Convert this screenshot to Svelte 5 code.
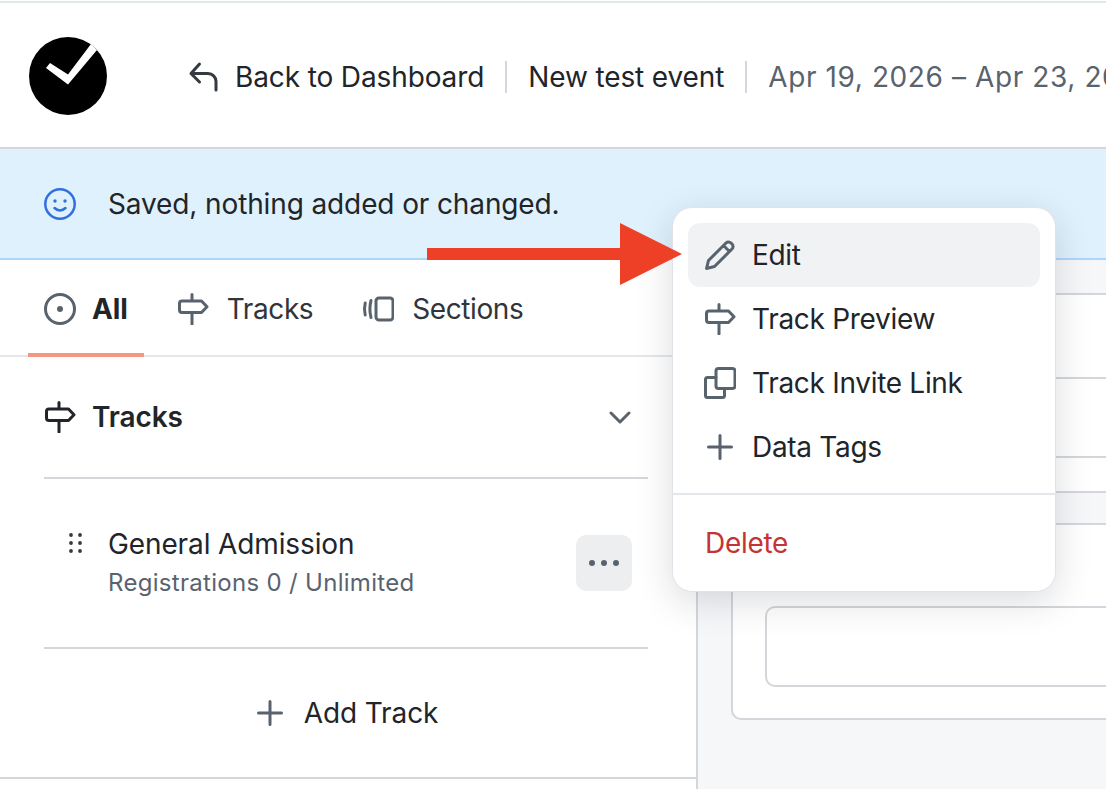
<script>
  const tabs = [
    { id: 'all', label: 'All', active: true },
    { id: 'tracks', label: 'Tracks' },
    { id: 'sections', label: 'Sections' }
  ];
  const menu = [
    { id: 'edit', label: 'Edit', hover: true },
    { id: 'sign', label: 'Track Preview' },
    { id: 'copy', label: 'Track Invite Link' },
    { id: 'plus', label: 'Data Tags' }
  ];
</script>

{#snippet sign()}
  <path d="M15 1.500V8M15 19.500V31M5 8a2.500 2.500 0 0 0-2.500 2.500V17a2.500 2.500 0 0 0 2.500 2.500H24.500L30 13.750 24.500 8Z" />
{/snippet}

{#snippet icon(id)}
  {#if id === 'all'}
    <svg class="ico" width="32" height="32" viewBox="0 0 32 32"><circle cx="16" cy="16" r="14.500" /><circle class="fill" cx="16" cy="16" r="3" /></svg>
  {:else if id === 'tracks' || id === 'sign'}
    <svg class="ico" width="32" height="32" viewBox="0 0 32 32">{@render sign()}</svg>
  {:else if id === 'sections'}
    <svg class="ico" width="32" height="32" viewBox="0 0 32 32"><rect x="14" y="5" width="17" height="22" rx="3" /><path d="M9 7.500Q6.800 16 9 24.500M3.200 10Q1.800 16 3.200 22" /></svg>
  {:else if id === 'edit'}
    <svg class="ico" width="32" height="32" viewBox="0 0 32 32"><path d="M2.500 29.500 4.500 21.500 22 4a3.500 3.500 0 0 1 5 0l1 1a3.500 3.500 0 0 1 0 5L10.500 27.500ZM19.500 6.500 25.500 12.500" /></svg>
  {:else if id === 'copy'}
    <svg class="ico" width="32" height="32" viewBox="0 0 32 32"><rect x="12" y="1.500" width="19" height="20" rx="2.500" /><path d="M12 10.500H3.500a2 2 0 0 0-2 2V28.500a2 2 0 0 0 2 2H18.500a2 2 0 0 0 2-2V21.500" /></svg>
  {:else if id === 'plus'}
    <svg class="ico" width="32" height="32" viewBox="0 0 32 32"><path d="M16 4.500V27.500M4.500 16H27.500" /></svg>
  {/if}
{/snippet}

<div class="page">
  <div class="strip"></div>

  <header class="top">
    <svg class="logo" width="78" height="78" viewBox="0 0 78 78">
      <circle cx="39" cy="39" r="39" fill="#000" />
      <path d="M17 31 21 26 39 37.500 62 7 68 13 39 47.500Z" fill="#fff" />
    </svg>
    <nav class="crumbs">
      <svg class="ico back" width="32" height="32" viewBox="0 0 32 32"><path d="M11.500 3 3 12.500 11.500 21M3 12.500H20a8 8 0 0 1 8 8V29" /></svg>
      <span class="back-label">Back to Dashboard</span>
      <i class="sep"></i>
      <span>New test event</span>
      <i class="sep"></i>
      <span class="muted">Apr 19, 2026 – Apr 23, 2026</span>
    </nav>
  </header>

  <div class="banner">
    <svg class="smile" width="32" height="32" viewBox="0 0 32 32">
      <circle cx="16" cy="16" r="14.700" />
      <circle class="eye" cx="11" cy="13" r="1.700" />
      <circle class="eye" cx="21" cy="13" r="1.700" />
      <path d="M10.500 20Q16 25 21.500 20" />
    </svg>
    <span>Saved, nothing added or changed.</span>
  </div>

  <main class="body">
    <section class="left">
      <div class="tabs">
        {#each tabs as t}
          <button class="tab" class:active={t.active}>
            {@render icon(t.id)}
            <span>{t.label}</span>
          </button>
        {/each}
      </div>

      <div class="inner">
        <div class="group-head">
          <svg class="ico dark" width="32" height="32" viewBox="0 0 32 32">{@render sign()}</svg>
          <strong>Tracks</strong>
          <svg class="ico chev" width="24" height="14" viewBox="0 0 24 14"><path d="M3 2 12 11 21 2" /></svg>
        </div>

        <div class="track">
          <svg class="grip" width="16" height="24" viewBox="0 0 16 24">
            {#each [3, 11, 19] as y}
              <circle cx="3" cy={y} r="1.900" /><circle cx="12" cy={y} r="1.900" />
            {/each}
          </svg>
          <div class="track-text">
            <div class="track-name">General Admission</div>
            <div class="track-sub">Registrations 0 / Unlimited</div>
          </div>
          <button class="more" aria-label="More"><b></b><b></b><b></b></button>
        </div>

        <div class="add">
          {@render icon('plus')}
          <span>Add Track</span>
        </div>
      </div>
      <div class="left-end"></div>
    </section>

    <section class="right">
      <div class="stack">
        <div class="row h84"></div>
        <div class="row h79"></div>
        <div class="row h33"></div>
      </div>
      <div class="card">
        <div class="field"></div>
      </div>
    </section>
  </main>

  <div class="menu">
    <ul>
      {#each menu as m}
        <li class:hover={m.hover}>
          {@render icon(m.id)}
          <span>{m.label}</span>
        </li>
      {/each}
    </ul>
    <hr />
    <div class="delete">Delete</div>
  </div>

  <svg class="arrow" width="256" height="64" viewBox="0 0 256 64">
    <path d="M0 25H193V0L255 31 193 62V37H0Z" fill="#ee4026" />
  </svg>
</div>

<style>
  :global(body) {
    margin: 0;
    background: #fff;
  }
  .page {
    position: relative;
    width: 1106px;
    height: 789px;
    overflow: hidden;
    display: flex;
    flex-direction: column;
    font-family: Inter, "Liberation Sans", sans-serif;
    font-size: 28px;
    line-height: 36px;
    letter-spacing: -0.12px;
    color: #212529;
    background: #fff;
  }
  .strip {
    flex: none;
    height: 2px;
    margin-top: 1px;
    background: #dfeae8;
  }
  .ico {
    flex: none;
    fill: none;
    stroke: #59636e;
    stroke-width: 3;
    stroke-linecap: round;
    stroke-linejoin: round;
  }
  .ico .fill {
    fill: #59636e;
    stroke: none;
  }
  .ico.dark {
    stroke: #212529;
  }
  .top {
    flex: none;
    height: 144px;
    display: flex;
    align-items: center;
    padding-left: 29px;
    border-bottom: 2px solid #d3d6da;
    white-space: nowrap;
  }
  .logo {
    flex: none;
    margin-top: 2px;
  }
  .crumbs {
    display: flex;
    align-items: center;
    gap: 21px;
    margin-left: 81px;
    padding-top: 4px;
  }
  .back {
    stroke: #343a40;
    margin-right: -6px;
  }
  .sep {
    width: 2px;
    height: 32px;
    background: #d3d8de;
  }
  .muted {
    letter-spacing: 0.6px;
    color: #59636e;
  }
  .banner {
    flex: none;
    height: 109px;
    display: flex;
    align-items: center;
    gap: 32px;
    padding-left: 44px;
    background: #dff1fc;
    border-bottom: 2px solid #b0d5fb;
  }
  .smile {
    flex: none;
    fill: none;
    stroke: #2f6fe0;
    stroke-width: 2.500;
    stroke-linecap: round;
  }
  .smile .eye {
    fill: #2f6fe0;
    stroke: none;
  }
  .body {
    flex: 1;
    display: flex;
    min-height: 0;
  }
  .left {
    flex: none;
    width: 696px;
    display: flex;
    flex-direction: column;
    background: #fff;
    border-right: 2px solid #d3d6da;
  }
  .tabs {
    flex: none;
    height: 95px;
    display: flex;
    gap: 33px;
    padding-left: 28px;
    border-bottom: 2px solid #e3e6ea;
  }
  .tab {
    display: flex;
    align-items: center;
    gap: 18px;
    height: 97px;
    padding: 4px 16px 0;
    margin: 0;
    border: 0;
    border-bottom: 4px solid transparent;
    background: none;
    font: inherit;
    letter-spacing: -0.4px;
    color: inherit;
    box-sizing: border-box;
  }
  .tab span {
    color: #2f353b;
  }
  .tab + .tab {
    padding-left: 0;
  }
  .tab.active {
    gap: 16px;
    letter-spacing: -0.12px;
    border-bottom-color: #f59681;
  }
  .tab.active span {
    font-weight: 700;
    color: #212529;
  }
  .inner {
    flex: none;
    margin: 0 48px 0 44px;
  }
  .group-head {
    height: 120px;
    display: flex;
    align-items: center;
    gap: 16px;
    border-bottom: 2px solid #d3d6da;
  }
  .group-head strong {
    flex: 1;
    font-weight: 600;
  }
  .chev {
    margin: 2px 16px 0 0;
  }
  .track {
    height: 168px;
    display: flex;
    align-items: flex-start;
    border-bottom: 2px solid #d3d6da;
  }
  .grip {
    flex: none;
    margin: 53px 0 0 24px;
    fill: #343a40;
  }
  .track-text {
    flex: 1;
    margin: 47px 0 0 24px;
  }
  .track-sub {
    margin-top: 5px;
    font-size: 24px;
    line-height: 32px;
    letter-spacing: 0.3px;
    color: #59636e;
  }
  .more {
    flex: none;
    width: 56px;
    height: 56px;
    margin: 56px 16px 0 0;
    padding: 0;
    display: flex;
    align-items: center;
    justify-content: center;
    gap: 6px;
    border: 0;
    border-radius: 10px;
    background: #eceef0;
  }
  .more b {
    width: 6px;
    height: 6px;
    border-radius: 50%;
    background: #59636e;
  }
  .add {
    height: 128px;
    display: flex;
    align-items: center;
    justify-content: center;
    gap: 18px;
  }
  .left-end {
    flex: 1;
    border-top: 2px solid #d3d6da;
  }
  .right {
    flex: 1;
    min-width: 0;
    padding-top: 33px;
    background: #f6f7f9;
  }
  .stack {
    margin-left: 33px;
  }
  .row {
    background: #fff;
    border-top: 2px solid #d3d6da;
    box-sizing: border-box;
  }
  .h84 { height: 84px; }
  .h79 { height: 79px; }
  .h33 {
    height: 33px;
    border-bottom: 2px solid #d3d6da;
    box-sizing: content-box;
  }
  .card {
    margin: 30px 0 0 33px;
    height: 197px;
    padding: 81px 0 0 32px;
    background: #fff;
    box-sizing: border-box;
    border: 2px solid #d3d6da;
    border-right: 0;
    border-bottom-left-radius: 10px;
  }
  .field {
    height: 81px;
    background: #fff;
    border: 2px solid #d3d6da;
    border-right: 0;
    border-radius: 10px 0 0 10px;
    box-sizing: border-box;
  }
  .menu {
    position: absolute;
    left: 672px;
    top: 207px;
    width: 384px;
    height: 385px;
    box-sizing: border-box;
    padding-top: 15px;
    letter-spacing: -0.3px;
    background: #fff;
    border: 1px solid #dfe3e8;
    border-radius: 20px;
    box-shadow: 0 10px 36px rgba(20, 30, 50, 0.15);
  }
  .menu ul {
    list-style: none;
    margin: 0;
    padding: 0 15px;
  }
  .menu li {
    height: 64px;
    box-sizing: border-box;
    display: flex;
    align-items: center;
    gap: 16px;
    padding: 0 0 0 16px;
    border-radius: 12px;
  }
  .menu li.hover {
    background: #f1f2f4;
  }
  .menu hr {
    margin: 14px 0 0;
    height: 2px;
    border: 0;
    background: #e3e6ea;
  }
  .delete {
    margin-top: 30px;
    padding-left: 32px;
    color: #c53434;
  }
  .arrow {
    position: absolute;
    left: 427px;
    top: 223px;
  }
</style>
